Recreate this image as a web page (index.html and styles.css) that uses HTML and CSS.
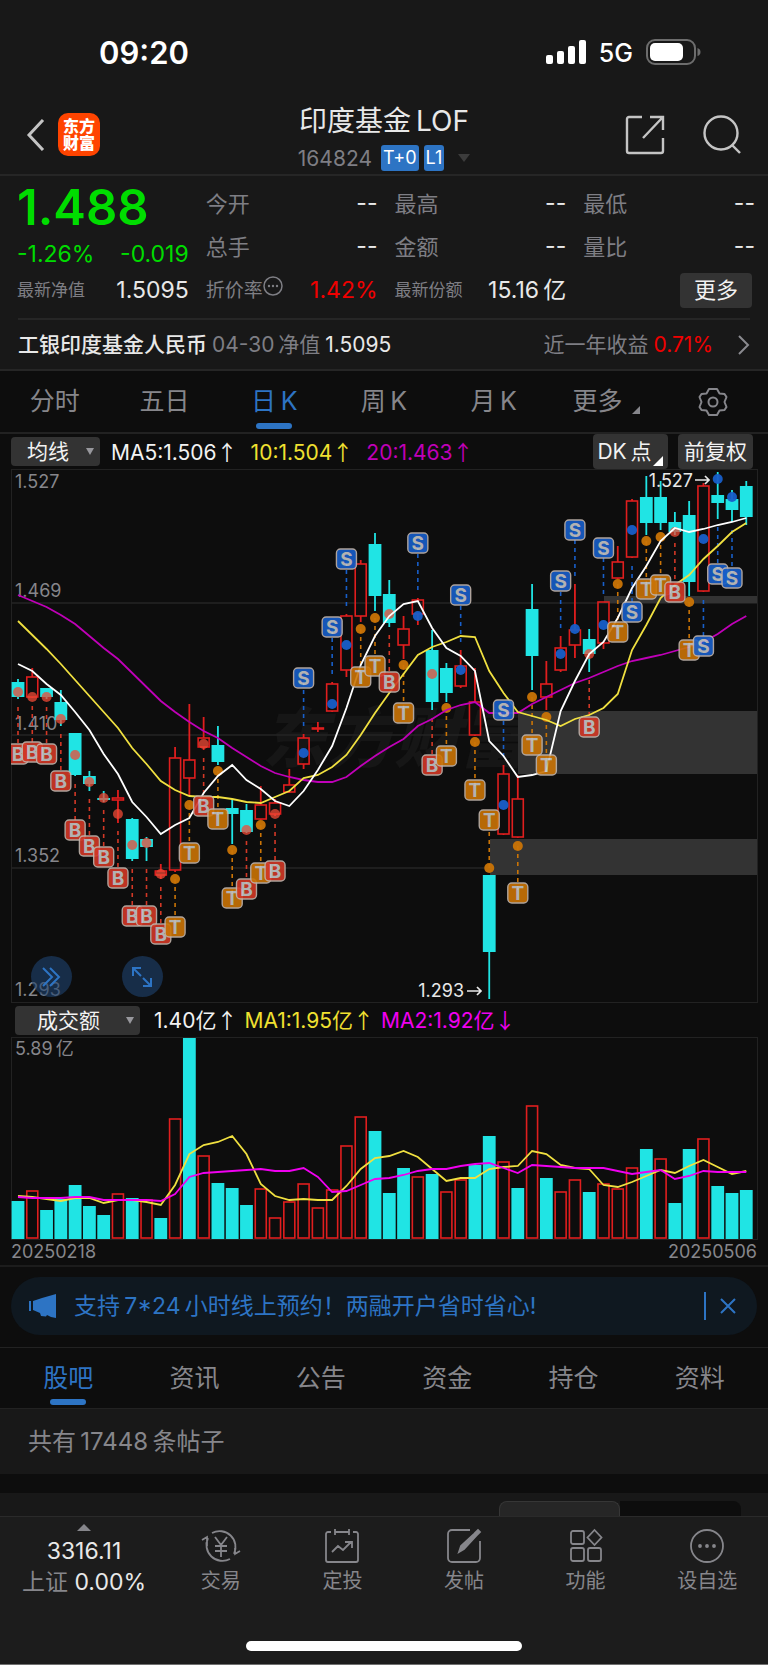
FILE: index.html
```html
<!DOCTYPE html>
<html lang="zh-CN">
<head>
    <meta charset="UTF-8">
    <meta name="viewport" content="width=device-width, initial-scale=1.0">
    <title>印度基金LOF 164824</title>
    <link rel="stylesheet" href="styles.css">
</head>
<body>
    <div class="status-bar">
        <span class="time">09:20</span>
        <div class="status-icons">
            <svg width="40" height="24" viewBox="0 0 40 24" fill="#fff">
                <rect x="0" y="15" width="7" height="9" rx="2"/>
                <rect x="11" y="11" width="7" height="13" rx="2"/>
                <rect x="22" y="6" width="7" height="18" rx="2"/>
                <rect x="33" y="0" width="7" height="24" rx="2"/>
            </svg>
            <span class="network">5G</span>
            <svg width="55" height="26" viewBox="0 0 55 26">
                <rect x="1" y="1" width="48" height="24" rx="8" fill="none" stroke="#6d6d6d" stroke-width="2"/>
                <rect x="4" y="4" width="33" height="18" rx="5" fill="#fff"/>
                <path d="M51.500 9v8q3-1 3-4t-3-4z" fill="#6d6d6d"/>
            </svg>
        </div>
    </div>

    <header class="header">
        <div class="header-left">
            <button class="icon-button" aria-label="返回">
                <svg width="20" height="32" viewBox="0 0 20 32" fill="none" stroke="#c4c4c4" stroke-width="3"><path d="M17 1 3 16l14 15"/></svg>
            </button>
            <a class="logo" href="#">东方<br>财富</a>
        </div>
        <div class="header-title">
            <h1>印度基金&thinsp;LOF</h1>
            <div class="header-code">
                <span>164824</span>
                <span class="badge">T+0</span>
                <span class="badge">L1</span>
                <i class="caret"></i>
            </div>
        </div>
        <div class="header-right">
            <button class="icon-button" aria-label="分享">
                <svg width="40" height="40" viewBox="0 0 40 40" fill="none" stroke="#c4c4c4" stroke-width="2.400"><path d="M17 2H4a2 2 0 0 0-2 2v32a2 2 0 0 0 2 2h32a2 2 0 0 0 2-2V23M25 2h13v13M38 2 18 23"/></svg>
            </button>
            <button class="icon-button" aria-label="搜索">
                <svg width="40" height="40" viewBox="0 0 40 40" fill="none" stroke="#c4c4c4" stroke-width="2.400"><circle cx="19" cy="18" r="16.500"/><path d="m30 30 8 8"/></svg>
            </button>
        </div>
    </header>

    <section class="quote">
        <div class="quote-grid">
            <div class="price-block">
                <div class="price">1.488</div>
                <div class="change"><span>-1.26%</span><span>-0.019</span></div>
            </div>
            <div class="stat"><span>今开</span><b>--</b></div>
            <div class="stat"><span>最高</span><b>--</b></div>
            <div class="stat"><span>最低</span><b>--</b></div>
            <div class="stat"><span>总手</span><b>--</b></div>
            <div class="stat"><span>金额</span><b>--</b></div>
            <div class="stat"><span>量比</span><b>--</b></div>
            <div class="stat small"><span>最新净值</span><b>1.5095</b></div>
            <div class="stat rate">
                <span>折价率<svg class="info" width="20" height="20" viewBox="0 0 20 20"><circle cx="10" cy="10" r="9" fill="none" stroke="#7e7e84" stroke-width="1.500"/><g fill="#7e7e84"><circle cx="6" cy="10" r="1.200"/><circle cx="10" cy="10" r="1.200"/><circle cx="14" cy="10" r="1.200"/></g></svg></span>
                <b class="up">1.42%</b>
            </div>
            <div class="stat small"><span>最新份额</span><b>15.16&thinsp;亿</b></div>
            <div class="stat more"><button class="more-button">更多</button></div>
        </div>
        <a class="fund" href="#">
            <span class="fund-name">工银印度基金人民币</span>
            <span class="muted">04-30&thinsp;净值</span>
            <span class="fund-value">1.5095</span>
            <span class="muted fund-year">近一年收益</span>
            <span class="up">0.71%</span>
            <svg width="12" height="20" viewBox="0 0 12 20" fill="none" stroke="#8a8a8f" stroke-width="2"><path d="m1 1 9 9-9 9"/></svg>
        </a>
    </section>

    <nav class="period-tabs">
        <button>分时</button>
        <button>五日</button>
        <button class="active">日&thinsp;K</button>
        <button>周&thinsp;K</button>
        <button>月&thinsp;K</button>
        <button class="has-corner">更多</button>
        <button aria-label="设置">
            <svg width="30" height="30" viewBox="0 0 30 30" fill="none" stroke="#86868b" stroke-width="2" stroke-linejoin="round"><path d="M11 2h8l2.500 4.500 5 .500 2 3-2 5 2 5-2 3-5 .500L19 28h-8l-2.500-4.500-5-.500-2-3 2-5-2-5 2-3 5-.500z"/><circle cx="15" cy="15" r="4.500"/></svg>
        </button>
    </nav>

    <div class="indicator-bar">
        <label class="picker"><select aria-label="主图指标"><option>均线</option></select></label>
        <span class="white">MA5:1.506<i class="arrow">↑</i></span>
        <span class="yellow">10:1.504<i class="arrow">↑</i></span>
        <span class="purple">20:1.463<i class="arrow">↑</i></span>
        <div class="indicator-actions">
            <button class="dk">DK&thinsp;点</button>
            <button>前复权</button>
        </div>
    </div>

    <div class="chart">
        <svg id="priceChart" viewBox="0 469 768 534"></svg>
        <div class="chart-tools">
            <button aria-label="快进"><svg width="22" height="22" viewBox="0 0 22 22" fill="none" stroke="#2d74c4" stroke-width="2"><path d="m3 2 9 9-9 9M10 2l9 9-9 9"/></svg></button>
            <button aria-label="全屏"><svg width="22" height="22" viewBox="0 0 22 22" fill="none" stroke="#2d74c4" stroke-width="2"><path d="M2 10V2h8M2 2l8 8M20 12v8h-8M20 20l-8-8"/></svg></button>
        </div>
    </div>

    <div class="indicator-bar volume-bar">
        <label class="picker wide"><select aria-label="副图指标"><option>成交额</option></select></label>
        <span class="white">1.40亿<i class="arrow">↑</i></span>
        <span class="yellow">MA1:1.95亿<i class="arrow">↑</i></span>
        <span class="magenta">MA2:1.92亿<i class="arrow">↓</i></span>
    </div>
    <svg id="volumeChart" class="volume" viewBox="0 1037 768 203"></svg>
    <div class="dates"><span>20250218</span><span>20250506</span></div>

    <div class="notice-wrap">
        <div class="notice">
            <svg width="28" height="24" viewBox="0 0 28 24" fill="#2d74c4"><path d="M0 7h2v10H0zM4 7l9-3 14-4v24l-5-1-4-2-1 1.500-5-.500-1-3-7-3z"/></svg>
            <a href="#">支持&thinsp;7*24&thinsp;小时线上预约！两融开户省时省心!</a>
            <button class="close" aria-label="关闭"><svg width="16" height="16" viewBox="0 0 16 16" stroke="#2d74c4" stroke-width="2"><path d="m1 1 14 14M15 1 1 15"/></svg></button>
        </div>
    </div>

    <nav class="info-tabs">
        <button class="active">股吧</button>
        <button>资讯</button>
        <button>公告</button>
        <button>资金</button>
        <button>持仓</button>
        <button>资料</button>
    </nav>
    <div class="post-count">共有&thinsp;17448&thinsp;条帖子</div>
    <div class="sort-panel"><div class="sort-switch"><i class="on"></i><i></i></div></div>

    <footer class="bottom">
        <nav class="bottom-nav">
            <a class="index" href="#">
                <i class="caret-up"></i>
                <span>3316.11</span>
                <span><em>上证</em> 0.00%</span>
            </a>
            <a href="#">
                <svg viewBox="0 0 40 36"><path d="M11 5a16 16 0 0 1 22 21M29 31A16 16 0 0 1 7 10M1 12l5-3v9M39 23l-5 3v-6M14 9l6 8 6-8M20 17v12M14 18h12M14 23h12"/></svg>
                <span>交易</span>
            </a>
            <a href="#">
                <svg viewBox="0 0 40 36"><path d="M9 4H6a2 2 0 0 0-2 2v26a2 2 0 0 0 2 2h28a2 2 0 0 0 2-2V6a2 2 0 0 0-2-2h-3M13 1v6M27 1v6M13 4h14M10 24l6-6 5 4 8-8M23 14h7v6"/></svg>
                <span>定投</span>
            </a>
            <a href="#">
                <svg viewBox="0 0 40 36"><path d="M26 2H8a4 4 0 0 0-4 4v24a4 4 0 0 0 4 4h24a4 4 0 0 0 4-4V13"/><path class="fill" d="M15 24l2-6L30 6l2 2-12 13zM31 5l3-3 2 2-3 3z"/></svg>
                <span>发帖</span>
            </a>
            <a href="#">
                <svg viewBox="0 0 40 36"><rect x="5" y="3" width="13" height="13" rx="2"/><rect x="5" y="20" width="13" height="13" rx="2"/><rect x="22" y="20" width="13" height="13" rx="2"/><path d="m28.500 2 7 7.500-7 7.500-7-7.500z"/></svg>
                <span>功能</span>
            </a>
            <a href="#">
                <svg viewBox="0 0 40 36"><circle cx="20" cy="18" r="16"/><g class="fill"><circle cx="13" cy="18" r="1"/><circle cx="20" cy="18" r="1"/><circle cx="27" cy="18" r="1"/></g></svg>
                <span>设自选</span>
            </a>
        </nav>
        <div class="home-indicator"></div>
    </footer>

    <script src="chart.js"></script>
</body>
</html>
```
FILE: styles.css
```css
* {
    box-sizing: border-box;
}
body {
    margin: 0;
    background-color: #0d0d0d;
    color: #e8e8e8;
    font-family: Inter, "Noto Sans CJK SC", sans-serif;
    font-size: 22px;
    line-height: 1;
}
button, select {
    border: none;
    padding: 0;
    background: none;
    color: inherit;
    font: inherit;
    cursor: pointer;
}
a {
    color: inherit;
    text-decoration: none;
}
i, em {
    font-style: normal;
}
svg {
    display: block;
}

.status-bar {
    display: flex;
    justify-content: space-between;
    align-items: center;
    height: 104px;
    padding: 0 67px 0 99px;
    background-color: #181818;
    color: #fff;
}
.time {
    font-size: 31px;
    font-weight: 600;
}
.status-icons {
    display: flex;
    align-items: center;
    gap: 13px;
}
.network {
    padding-top: 2px;
    font-size: 25px;
    font-weight: 500;
}

.header {
    display: grid;
    grid-template-columns: 1fr auto 1fr;
    align-items: center;
    height: 72px;
    padding: 0 26px 1px;
    background-color: #181818;
    border-bottom: 2px solid #262626;
}
.header-left, .header-right {
    display: flex;
    align-items: center;
    gap: 12px;
}
.header-right {
    justify-content: flex-end;
    gap: 37px;
}
.icon-button, .logo {
    margin-bottom: 8px;
}
.logo {
    width: 42px;
    padding: 5px 0 4px;
    border-radius: 10px;
    background-color: #ff4400;
    color: #fff;
    font-size: 16px;
    font-weight: 900;
    line-height: 17px;
    text-align: center;
}
.header-title {
    text-align: center;
}
.header-title h1 {
    margin: 0 0 9px;
    font-size: 28px;
    font-weight: 400;
    line-height: 30px;
}
.header-code {
    display: flex;
    align-items: center;
    justify-content: center;
    gap: 5px;
    color: #7e7e84;
}
.header-code span:first-child {
    font-size: 21px;
    margin-right: 4px;
}
.badge {
    padding: 0 2px;
    border-radius: 3px;
    background-color: #2d74c4;
    color: #fff;
    font-size: 18px;
    line-height: 26px;
}
.caret {
    margin-left: 9px;
    border: 6px solid transparent;
    border-top: 8px solid #3c3c3c;
    border-bottom: 0;
}

.quote {
    background-color: #181818;
    border-bottom: 2px solid #262626;
}
.quote-grid {
    display: grid;
    grid-template-columns: repeat(4, 1fr);
    grid-template-rows: 43px 43px 44px;
    column-gap: 17px;
    padding: 6px 13px 0 17px;
}
.price-block {
    grid-row: span 2;
    color: #00dc00;
}
.price {
    font-size: 49px;
    font-weight: 600;
    line-height: 52px;
}
.change {
    display: flex;
    justify-content: space-between;
    font-size: 23px;
    line-height: 40px;
}
.stat {
    display: flex;
    justify-content: space-between;
    align-items: center;
    color: #7e7e84;
}
.stat b {
    color: #e8e8e8;
    font-size: 23px;
    font-weight: 400;
}
.stat.small span {
    font-size: 17px;
}
.stat.rate span {
    display: flex;
    font-size: 19px;
}
.info {
    margin-top: -5px;
}
.stat.more {
    justify-content: flex-end;
    padding-right: 3px;
}
.more-button {
    width: 72px;
    height: 35px;
    border-radius: 4px;
    background-color: #333;
    color: #f2f2f2;
}
.stat b.up, .up {
    color: #f00000;
}
.muted {
    color: #7e7e84;
}
.fund {
    display: flex;
    align-items: center;
    gap: 5px;
    height: 51px;
    margin: 6px 18px 0;
    border-top: 2px solid #262626;
    font-size: 21px;
}
.fund-name {
    font-weight: 500;
}
.fund-year {
    margin-left: auto;
}
.fund svg {
    margin-left: 20px;
}

.period-tabs {
    display: grid;
    grid-template-columns: repeat(7, 1fr);
    height: 63px;
    border-bottom: 2px solid #222;
    color: #86868b;
    font-size: 25px;
}
.period-tabs button, .info-tabs button {
    display: flex;
    align-items: center;
    justify-content: center;
    position: relative;
}
.period-tabs .active, .info-tabs .active {
    color: #2d74c4;
}
.active::after {
    content: "";
    position: absolute;
    bottom: 3px;
    width: 36px;
    height: 6px;
    border-radius: 3px;
    background-color: #2d74c4;
}
.period-tabs .has-corner {
    padding-right: 12px;
}
.has-corner::after {
    content: "";
    position: absolute;
    right: 18px;
    bottom: 18px;
    border-left: 8px solid transparent;
    border-bottom: 8px solid #86868b;
}

.indicator-bar {
    display: flex;
    align-items: center;
    gap: 13px;
    height: 35px;
    padding: 0 15px 0 11px;
    font-size: 21px;
    white-space: nowrap;
}
.picker {
    position: relative;
    width: 89px;
    margin-right: -2px;
}
.picker select {
    appearance: none;
    width: 100%;
    height: 29px;
    padding-left: 16px;
    border-radius: 4px;
    background-color: #333;
    color: #f2f2f2;
}
.picker::after {
    content: "";
    position: absolute;
    top: 11px;
    right: 6px;
    border: 4px solid transparent;
    border-top: 7px solid #98989d;
    border-bottom: 0;
    pointer-events: none;
}
.arrow {
    font-family: "Noto Sans CJK SC", sans-serif;
}
.white {
    color: #f2f2f2;
}
.yellow {
    color: #f0e030;
}
.purple {
    color: #c000b8;
}
.magenta {
    color: #f000f0;
}
.indicator-actions {
    display: flex;
    gap: 10px;
    margin-left: auto;
}
.indicator-actions button {
    position: relative;
    width: 75px;
    height: 35px;
    border-radius: 4px;
    background-color: #333;
    color: #f2f2f2;
}
.dk::after {
    content: "";
    position: absolute;
    right: 5px;
    bottom: 3px;
    border-left: 10px solid transparent;
    border-bottom: 10px solid #fff;
}
.indicator-actions .dk {
    padding-right: 12px;
}

.chart {
    position: relative;
}
.chart svg, .volume {
    width: 100%;
}
.chart-tools {
    position: absolute;
    left: 31px;
    bottom: 6px;
    display: flex;
    gap: 50px;
}
.chart-tools button {
    width: 41px;
    height: 41px;
    padding: 9px;
    border-radius: 50%;
    background-color: rgba(30, 66, 112, 0.6);
}
.chart-tools svg {
    width: 22px;
}
.axis {
    fill: #86868b;
    font-size: 18px;
}
.extreme {
    fill: #e8e8e8;
    font-size: 18px;
    text-anchor: end;
}
.watermark {
    fill: #161616;
    font-size: 66px;
    font-style: italic;
    font-weight: 900;
}
.marker-text {
    fill: #c4c4c4;
    font-size: 19px;
    font-weight: 700;
    text-anchor: middle;
}

.volume-bar {
    height: 34px;
    padding-left: 15px;
    gap: 7px;
}
.picker.wide {
    width: 125px;
    margin-right: 7px;
}
.picker.wide select {
    padding-left: 22px;
}
.dates {
    display: flex;
    justify-content: space-between;
    padding: 2px 11px 0;
    height: 25px;
    color: #86868b;
    font-size: 18px;
    line-height: 19px;
}

.notice-wrap {
    padding: 10px 11px 12px;
    border-top: 2px solid #1c1c1c;
    border-bottom: 1px solid #222;
}
.notice {
    display: flex;
    align-items: center;
    gap: 17px;
    height: 58px;
    padding: 0 21px 0 18px;
    border-radius: 29px;
    background-color: #0f1820;
    color: #2d74c4;
    font-size: 23px;
}
.close {
    margin-left: auto;
    padding: 6px 0 6px 14px;
    border-left: 2px solid #2d74c4;
}

.info-tabs {
    display: grid;
    grid-template-columns: repeat(6, 1fr);
    height: 60px;
    padding: 0 5px;
    color: #86868b;
    font-size: 25px;
}
.post-count {
    padding: 0 28px;
    background-color: #181818;
    border-top: 1px solid #222;
    color: #86868b;
    font-size: 24px;
    line-height: 65px;
}
.sort-panel {
    margin-top: 19px;
    padding: 8px 27px 0;
    background-color: #181818;
}
.sort-switch {
    display: flex;
    justify-content: flex-end;
    height: 15px;
}
.sort-switch i {
    width: 121px;
    border-radius: 0 8px 0 0;
    background-color: #0d0d0d;
}
.sort-switch .on {
    border: 1px solid #363636;
    border-bottom: 0;
    border-radius: 8px 8px 0 0;
    background-color: #262626;
}

.bottom {
    height: 149px;
    background-color: #1c1c1c;
    border-top: 1px solid #2a2a2a;
    border-bottom: 1px solid #707070;
}
.bottom-nav {
    display: grid;
    grid-template-columns: 160px repeat(5, 1fr);
    height: 124px;
    color: #86868b;
    font-size: 20px;
}
.bottom-nav a {
    display: flex;
    flex-direction: column;
    align-items: center;
    padding-top: 11px;
    gap: 7px;
}
.bottom-nav svg {
    width: 40px;
    height: 36px;
    fill: none;
    stroke: #86868b;
    stroke-width: 1.8px;
}
.bottom-nav svg .fill {
    fill: #86868b;
}
.bottom-nav .index {
    padding-top: 7px;
    padding-left: 8px;
    color: #e8e8e8;
    font-size: 23px;
    line-height: 22px;
    gap: 9px;
}
.index em {
    color: #86868b;
}
.caret-up {
    border: 7px solid transparent;
    border-bottom: 7px solid #86868b;
    border-top: 0;
}
.home-indicator {
    width: 276px;
    height: 10px;
    margin: 0 auto;
    border-radius: 5px;
    background-color: #fff;
}
```
FILE: chart.js
```js
const UP = '#e01e1e';
const DOWN = '#20e4e4';
const COLORS = { B: '#d23826', T: '#ca7406', S: '#185fca' };
const BAR = 12;

// x of the n-th trading day
const x = i => 18 + i * 14.28;

// [direction, high, body top, body bottom, low, signal, dot y, signal box y]
const candles = [
    ['d', 679, 682, 697, 699, 'B', 692, 754],
    ['u', 668, 677, 697, 698, 'B', 697, 752],
    ['d', 688, 688, 697, 699, 'B', 697, 754],
    ['d', 690, 702, 720, 726, 'B', 719, 781],
    ['d', 733, 733, 775, 776, 'B', 755, 830],
    ['d', 771, 776, 784, 791, 'B', 782, 846],
    ['d', 791, 798, 800, 802, 'B', 798, 857],
    ['u', 790, 798, 800, 823, 'B', 814, 878],
    ['d', 818, 819, 859, 861, 'B', 845, 916],
    ['d', 837, 839, 847, 861, 'B', 843, 916],
    ['u', 864, 871, 875, 879, 'B', 874, 934],
    ['u', 747, 758, 870, 872, 'T', 879, 927],
    ['u', 704, 760, 778, 796, 'T', 805, 853],
    ['u', 717, 738, 747, 750, 'B', 744, 806],
    ['d', 726, 745, 762, 765, 'T', 771, 819],
    ['d', 799, 808, 814, 844, 'T', 850, 898],
    ['d', 804, 810, 832, 833, 'B', 830, 889],
    ['u', 786, 805, 819, 820, 'T', 825, 873],
    ['u', 799, 803, 814, 816, 'B', 814, 871],
    ['u', 769, 785, 792, 793],
    ['u', 734, 738, 764, 769, 'S', 753, 678],
    ['u', 722, 728, 729, 732],
    ['u', 682, 684, 711, 712, 'S', 704, 627],
    ['u', 614, 616, 670, 677, 'S', 645, 559],
    ['u', 560, 564, 616, 622, 'T', 629, 677],
    ['d', 533, 544, 596, 611, 'T', 618, 666],
    ['d', 580, 594, 623, 627, 'B', 614, 682],
    ['u', 616, 629, 645, 659, 'T', 665, 713],
    ['u', 598, 600, 614, 625, 'S', 616, 543],
    ['d', 630, 650, 702, 710, 'B', 674, 765],
    ['d', 663, 668, 693, 702, 'T', 708, 756],
    ['u', 650, 666, 686, 688, 'S', 670, 595],
    ['u', 668, 702, 735, 736, 'T', 742, 790],
    ['d', 875, 875, 952, 999, 'T', 868, 820],
    ['u', 765, 774, 834, 835, 'S', 805, 710],
    ['u', 775, 799, 837, 838, 'T', 846, 893],
    ['d', 584, 609, 656, 690, 'T', 697, 745],
    ['u', 661, 684, 697, 710, 'T', 717, 765],
    ['u', 636, 648, 670, 672, 'S', 654, 581],
    ['u', 584, 630, 645, 658, 'S', 629, 530],
    ['d', 629, 639, 654, 672, 'B', 654, 727],
    ['u', 602, 602, 643, 649, 'S', 625, 548],
    ['u', 546, 562, 578, 579, 'T', 584, 632],
    ['u', 499, 501, 557, 558, 'S', 530, 612],
    ['d', 476, 497, 523, 535, 'T', 541, 589],
    ['d', 481, 497, 523, 530, 'T', 537, 585],
    ['d', 512, 522, 532, 535, 'B', 532, 592],
    ['d', 501, 515, 582, 596, 'T', 602, 650],
    ['u', 483, 486, 591, 592, 'S', 539, 646],
    ['d', 472, 495, 503, 519, 'S', 479, 574],
    ['d', 490, 499, 510, 522, 'S', 497, 578],
    ['d', 481, 486, 517, 525]
];

const ma5 = [664, 671, 684, 695, 712, 730, 754, 774, 802, 817, 834, 825, 818, 793, 776, 765, 780, 789, 801, 806, 791, 770, 746, 708, 665, 636, 616, 604, 601, 628, 648, 656, 671, 741, 756, 777, 775, 771, 711, 681, 654, 642, 618, 588, 566, 541, 528, 532, 529, 525, 522, 518];
const ma10 = [621, 635, 649, 664, 680, 696, 712, 728, 748, 764, 781, 790, 796, 797, 797, 799, 802, 803, 797, 791, 778, 775, 767, 755, 735, 713, 693, 674, 655, 647, 642, 636, 637, 671, 693, 712, 716, 720, 726, 719, 715, 708, 694, 650, 625, 598, 585, 575, 559, 546, 532, 523];
const ma20 = [595, 601, 607, 615, 624, 636, 648, 659, 673, 687, 701, 712, 722, 731, 738, 748, 757, 766, 773, 777, 780, 782, 782, 777, 766, 756, 747, 739, 726, 719, 710, 705, 702, 713, 713, 713, 704, 697, 690, 683, 678, 672, 666, 661, 658, 655, 651, 647, 642, 634, 624, 616];

// direction + top of the bar
const volumes = 'd1201 u1191 d1210 d1199 d1185 d1206 d1215 u1194 d1198 u1200 d1218 u1119 d1038 u1156 d1183 d1188 d1205 u1189 u1218 u1202 u1184 u1208 u1190 u1146 u1117 d1131 d1193 d1168 u1177 d1174 u1192 u1180 d1165 d1136 u1162 d1188 u1106 d1178 u1192 u1180 d1192 u1184 u1189 u1168 d1149 u1159 d1203 d1149 u1139 d1186 d1193 d1190'.split(' ');
const vma1 = [1196, 1197, 1199, 1201, 1198, 1198, 1203, 1200, 1200, 1202, 1205, 1185, 1154, 1145, 1142, 1136, 1154, 1184, 1196, 1200, 1199, 1200, 1200, 1186, 1169, 1158, 1156, 1151, 1157, 1169, 1181, 1178, 1178, 1169, 1167, 1166, 1151, 1154, 1165, 1168, 1169, 1185, 1187, 1182, 1176, 1170, 1173, 1166, 1160, 1167, 1174, 1171];
const vma2 = [1197, 1198, 1198, 1198, 1197, 1197, 1200, 1200, 1200, 1200, 1201, 1194, 1177, 1173, 1172, 1171, 1170, 1169, 1171, 1171, 1168, 1177, 1192, 1191, 1185, 1179, 1178, 1175, 1171, 1169, 1169, 1166, 1164, 1163, 1168, 1173, 1165, 1166, 1167, 1168, 1168, 1168, 1171, 1174, 1172, 1170, 1179, 1176, 1171, 1172, 1172, 1172];

function line(values, color) {
    const points = values.map((y, i) => `${x(i)},${y}`).join(' ');
    return `<polyline points="${points}" fill="none" stroke="${color}" stroke-width="1.8"/>`;
}

function bar(i, dir, top, bottom) {
    if (dir === 'd') {
        return `<rect x="${x(i) - 6.4}" y="${top}" width="12.8" height="${bottom - top}" fill="${DOWN}"/>`;
    }
    return `<rect x="${x(i) - BAR / 2 + 0.5}" y="${top}" width="${BAR - 1}" height="${bottom - top}" fill="none" stroke="${UP}" stroke-width="1.6"/>`;
}

function candle(c, i) {
    const [dir, high, top, bottom, low] = c;
    const color = dir === 'd' ? DOWN : UP;
    return `<path d="M${x(i)} ${high}V${top}M${x(i)} ${bottom}V${low}" stroke="${color}" stroke-width="1.8"/>` + bar(i, dir, top, bottom);
}

function stem(c, i) {
    const [, high, , , low, type, dot, box] = c;
    if (!type) return '';
    let from = box > dot ? low + 8 : high - 8;
    if (type === 'T') from = dot;
    return `<path d="M${x(i)} ${from}V${box}" stroke="${COLORS[type]}" stroke-width="1.6" stroke-dasharray="4 4"/>
        <circle cx="${x(i)}" cy="${dot}" r="5" fill="${type === 'B' ? '#f04a36' : COLORS[type]}" fill-opacity="${type === 'B' ? 0.75 : 0.95}"/>`;
}

function marker(c, i) {
    const [, , , , , type, , box] = c;
    if (!type) return '';
    return `<g opacity="0.9"><rect x="${x(i) - 10}" y="${box - 10}" width="20" height="20" rx="4" fill="${COLORS[type]}" stroke="#c0b4ac" stroke-width="1.4"/>
        <text class="marker-text" x="${x(i)}" y="${box + 7}">${type}</text></g>`;
}

function drawPrice() {
    const grid = [603, 735, 868].map(y => `<path d="M11 ${y}H757" stroke="#242424" stroke-width="1.5"/>`).join('');
    const labels = [['1.527', 488], ['1.469', 597], ['1.410', 730], ['1.352', 862], ['1.293', 996]]
        .map(([t, y]) => `<text class="axis" x="15" y="${y}">${t}</text>`).join('');
    document.getElementById('priceChart').innerHTML = `
        <rect x="11.5" y="469.5" width="746" height="533" fill="none" stroke="#222"/>
        <text class="watermark" x="262" y="762">东方财富</text>
        ${grid}
        <path d="M604 596H757V603H604zM518 711H757V774H518zM490 839H757V875H490z" fill="#333"/>
        ${labels}
        ${candles.map(candle).join('')}
        ${candles.map(stem).join('')}
        ${line(ma20, '#c000b8')}${line(ma10, '#f0e040')}${line(ma5, '#fff')}
        <clipPath id="plot"><rect x="11" y="469" width="746" height="534"/></clipPath>
        <g clip-path="url(#plot)">${candles.map(marker).join('')}</g>
        <text class="extreme" x="693" y="487">1.527</text>
        <text class="extreme" x="464" y="997">1.293</text>
        <path d="M695 480H709M705 476l4 4-4 4M467 991H481M477 987l4 4-4 4" fill="none" stroke="#e8e8e8" stroke-width="1.7"/>`;
}

function drawVolume() {
    document.getElementById('volumeChart').innerHTML = `
        <rect x="11.5" y="1037.5" width="746" height="202" fill="none" stroke="#222"/>
        ${volumes.map((v, i) => bar(i, v[0], +v.slice(1), v[0] === 'd' ? 1239 : 1238)).join('')}
        ${line(vma1, '#f0e040')}${line(vma2, '#f000f0')}
        <text class="axis" x="15" y="1055">5.89&#8201;亿</text>`;
}

drawPrice();
drawVolume();
```
